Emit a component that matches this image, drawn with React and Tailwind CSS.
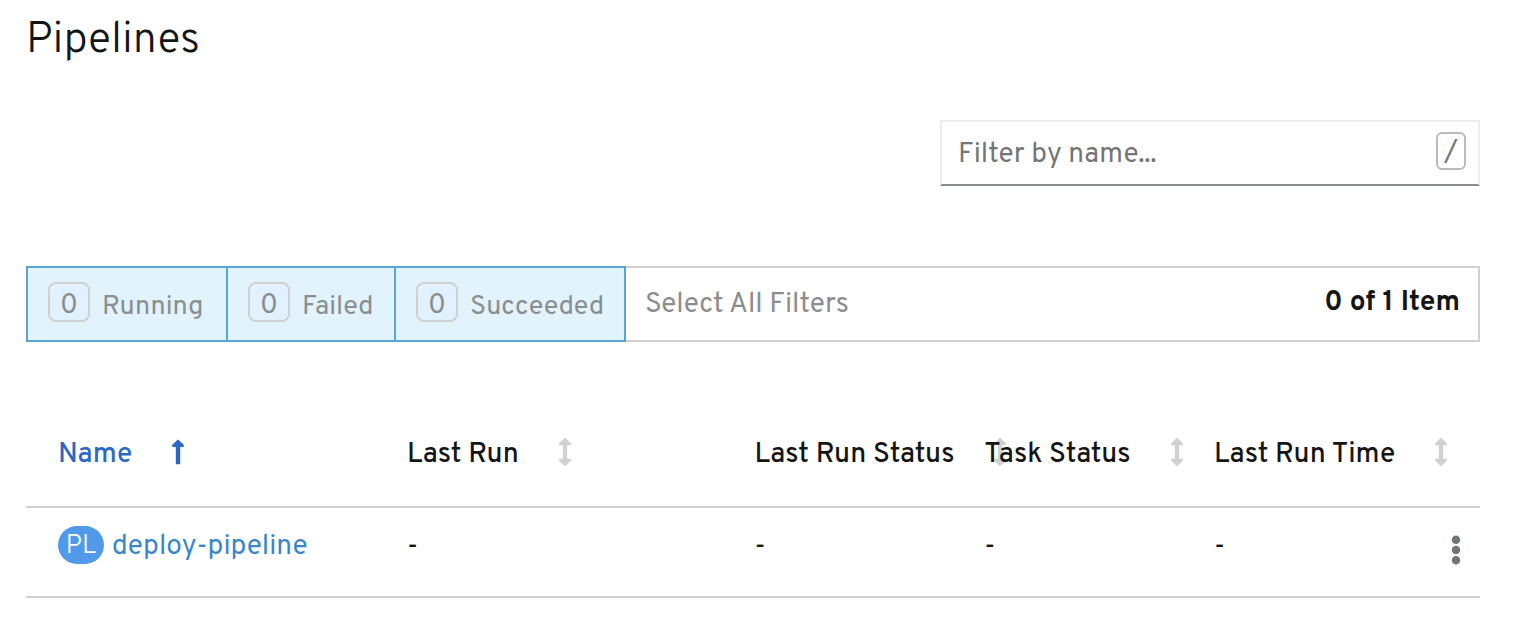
import { FaArrowsAltV, FaEllipsisV, FaLongArrowAltUp } from "react-icons/fa";

const filters = [
  { label: "Running", count: 0, box: "w-[202px]" },
  { label: "Failed", count: 0, box: "-ml-[2px] w-[170px]" },
  { label: "Succeeded", count: 0, box: "-ml-[2px] w-[232px]" },
];

const columns = ["Name", "Last Run", "Last Run Status", "Task Status", "Last Run Time"];

const pipelines = [{ name: "deploy-pipeline", values: ["-", "-", "-", "-"] }];

function FilterBox({ label, count, box }) {
  return (
    <button
      type="button"
      aria-pressed="true"
      className={`flex h-[76px] shrink-0 items-start gap-3 border-2 border-[#58a5d8] bg-[#e1f3fd] pt-[14px] pl-5 text-[27px] text-[#8b8d8f] ${box}`}
    >
      <span className="flex h-10 w-[42px] shrink-0 items-center justify-center rounded-lg border-2 border-[#d1d1d1] bg-[#e1f1ff] pt-2 text-[28px]">
        {count}
      </span>
      <span className="pt-1">{label}</span>
    </button>
  );
}

function SortHeader({ label, active }) {
  return (
    <th
      scope="col"
      aria-sort={active ? "ascending" : "none"}
      className="pt-[35px] pb-[30px] pl-8 text-left font-medium"
    >
      <button
        type="button"
        className={`flex items-start gap-[39px] whitespace-nowrap ${active ? "text-[#2b68c5]" : ""}`}
      >
        <span>{label}</span>
        {active ? (
          <FaLongArrowAltUp className="mt-1 h-7 w-[14px] shrink-0" />
        ) : (
          <FaArrowsAltV className="mt-1 h-7 w-[14px] shrink-0 text-[#d1d1d1]" />
        )}
      </button>
    </th>
  );
}

export default function App() {
  return (
    <main className="min-h-screen bg-white pt-[15px] pr-[34px] pl-[26px] font-['Overpass','Roboto',sans-serif] text-[28px] leading-[42px] text-[#151515]">
      <h1 className="text-[43px] leading-[52px] font-light">Pipelines</h1>

      <div className="mt-[53px] flex justify-end">
        <div className="relative w-[540px]">
          <input
            type="text"
            aria-label="Filter by name"
            placeholder="Filter by name..."
            className="h-[66px] w-full border-2 border-[#ededed] border-b-[#8a8d90] bg-white pt-1 pr-14 pl-4 placeholder:text-[#757575] placeholder:opacity-100"
          />
          <kbd className="absolute top-3 right-[14px] flex h-[38px] w-[30px] items-center justify-center rounded-md border-2 border-[#bbbbbb] pt-1 font-['Overpass','Roboto',sans-serif] text-[#72767b]">
            /
          </kbd>
        </div>
      </div>

      <div className="mt-20 flex">
        {filters.map((f) => (
          <FilterBox key={f.label} {...f} />
        ))}
        <div className="flex flex-1 items-start justify-between border-2 border-l-0 border-[#d1d1d1] pt-4 pr-[18px] pl-[19px]">
          <button type="button" className="text-[#8b8d8f]">
            Select All Filters
          </button>
          <span className="leading-[38px] font-bold">0 of 1 Item</span>
        </div>
      </div>

      <table className="mt-[57px] w-full table-fixed border-collapse">
        <colgroup>
          <col className="w-[24%]" />
          <col className="w-[23.9%]" />
          <col className="w-[15.8%]" />
          <col className="w-[15.8%]" />
          <col />
          <col className="w-[68px]" />
        </colgroup>
        <thead>
          <tr className="border-b-2 border-[#d1d1d1]">
            {columns.map((label, i) => (
              <SortHeader key={label} label={label} active={i === 0} />
            ))}
            <td />
          </tr>
        </thead>
        <tbody>
          {pipelines.map((p) => (
            <tr key={p.name} className="border-b-2 border-[#d1d1d1]">
              <td className="pt-[18px] pb-7 pl-8">
                <div className="flex items-start gap-2">
                  <span className="flex h-[38px] w-[46px] shrink-0 items-center justify-center rounded-[20px] bg-[#519ae9] pt-1 text-[26px] font-light text-white">
                    PL
                  </span>
                  <a href="#deploy-pipeline" className="text-[#3a87c8]">
                    {p.name}
                  </a>
                </div>
              </td>
              {p.values.map((v, i) => (
                <td key={columns[i + 1]} className="pt-[18px] pb-7 pl-8">
                  {v}
                </td>
              ))}
              <td className="pt-[21px] pr-3 pb-[25px]">
                <button
                  type="button"
                  aria-label="Actions"
                  className="ml-auto flex h-10 w-6 items-center justify-center text-[#72767b]"
                >
                  <FaEllipsisV className="h-[30px] w-3" />
                </button>
              </td>
            </tr>
          ))}
        </tbody>
      </table>
    </main>
  );
}
